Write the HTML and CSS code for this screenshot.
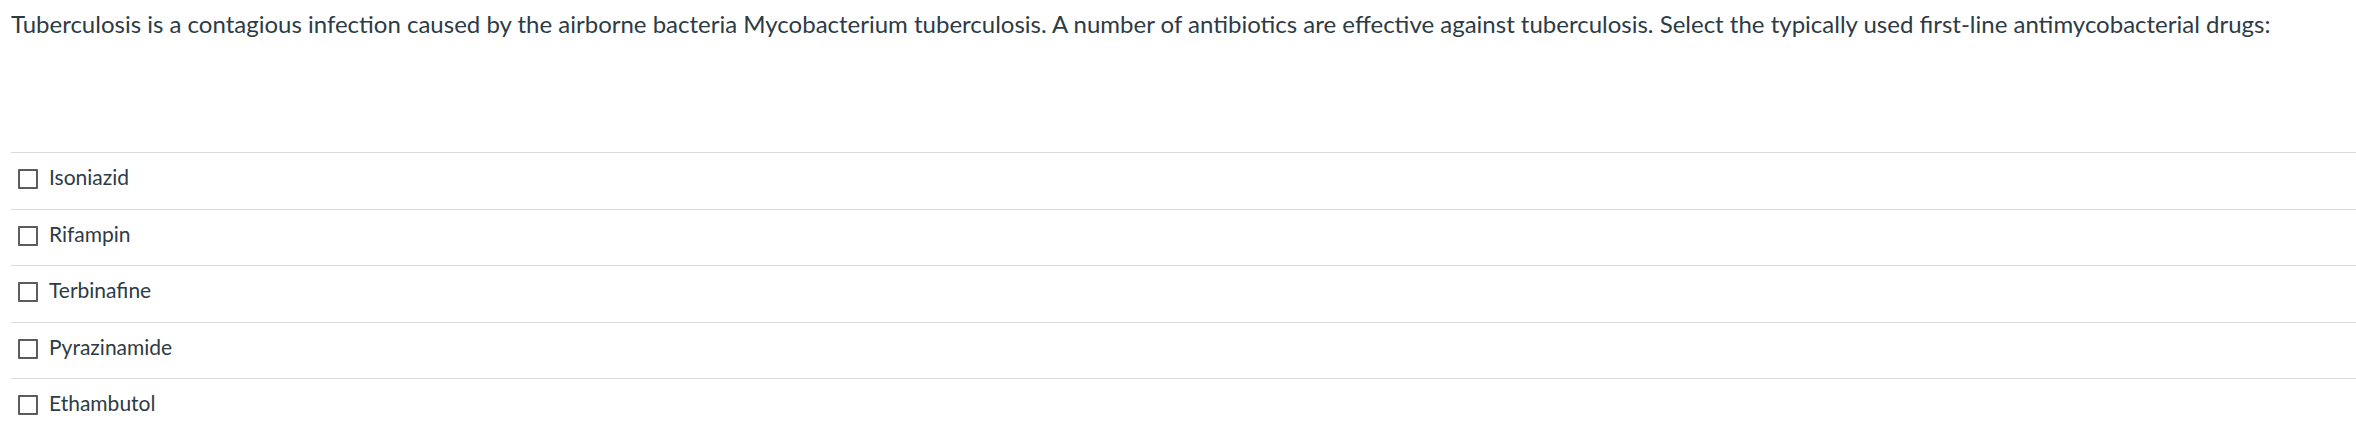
FILE: index.html
```html
<!DOCTYPE html>
<html lang="en">
<head>
<meta charset="utf-8">
<title>Question</title>
<link rel="stylesheet" href="styles.css">
</head>
<body>
<div class="question">
  <p class="question-text">Tuberculosis is a contagious infection caused by the airborne bacteria Mycobacterium tuberculosis. A number of antibiotics are effective against tuberculosis. Select the typically used first-line antimycobacterial drugs:</p>
  <div class="answers">
    <label class="answer"><span class="box"></span><span class="label">Isoniazid</span></label>
    <label class="answer"><span class="box"></span><span class="label">Rifampin</span></label>
    <label class="answer"><span class="box"></span><span class="label">Terbinafine</span></label>
    <label class="answer"><span class="box"></span><span class="label">Pyrazinamide</span></label>
    <label class="answer"><span class="box"></span><span class="label">Ethambutol</span></label>
  </div>
</div>
</body>
</html>
```
FILE: styles.css
```css
html, body {
  margin: 0;
  padding: 0;
  background: #ffffff;
}
body {
  font-family: Lato, "Open Sans", "Liberation Sans", sans-serif;
  color: #2d3b45;
  overflow: hidden;
}
.question {
  padding: 6px 0 0 11px;
}
.question-text {
  margin: 0;
  font-size: 24px;
  line-height: 36px;
  white-space: nowrap;
}
.answers {
  margin-top: 110px;
}
.answer {
  display: flex;
  align-items: flex-start;
  box-sizing: border-box;
  height: 56.5px;
  border-top: 1px solid #dadada;
  padding: 8px 0 0 7px;
  font-size: 21px;
  line-height: 31.5px;
}
.box {
  box-sizing: border-box;
  width: 20px;
  height: 20px;
  margin-top: 8px;
  border: 2px solid #5c5c5c;
  border-radius: 1px;
  background: #fff;
  flex: none;
}
.label {
  margin-left: 11px;
}
```
